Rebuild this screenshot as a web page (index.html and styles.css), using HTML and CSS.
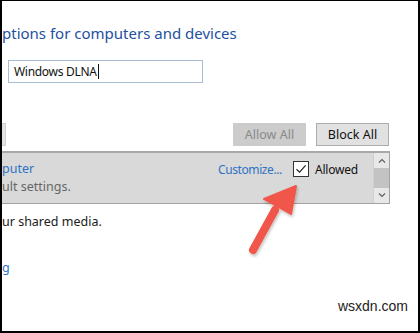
FILE: index.html
```html
<!DOCTYPE html>
<html>
<head>
<meta charset="utf-8">
<link rel="stylesheet" href="styles.css">
</head>
<body>
<div class="frame">
  <h1 class="title">ptions for computers and devices</h1>
  <div class="field"><span class="field-text">Windows DLNA</span><span class="caret"></span></div>
  <div class="toolbar">
    <span class="btn btn-stub"></span>
    <span class="spacer"></span>
    <span class="btn btn-disabled">Allow All</span>
    <span class="btn">Block All</span>
  </div>
  <div class="panel">
    <div class="row">
      <div class="row-info">
        <div class="row-name">puter</div>
        <div class="row-desc">ult settings.</div>
      </div>
      <div class="row-actions">
        <span class="link">Customize...</span>
        <span class="check">
          <svg width="14" height="14" viewBox="0 0 14 14"><path d="M2.5 7.2 L5.6 10.2 L11.6 3.4" fill="none" stroke="#222" stroke-width="1.2"/></svg>
        </span>
        <span class="check-label">Allowed</span>
      </div>
    </div>
    <div class="scrollbar">
      <svg class="sb-arrow" width="8" height="6" viewBox="0 0 8 6"><path d="M1 4.5 L4 1.5 L7 4.5" fill="none" stroke="#606060" stroke-width="1.2"/></svg>
      <span class="sb-thumb"></span>
      <svg class="sb-arrow" width="8" height="6" viewBox="0 0 8 6"><path d="M1 1.5 L4 4.5 L7 1.5" fill="none" stroke="#606060" stroke-width="1.2"/></svg>
    </div>
  </div>
  <p class="note">ur shared media.</p>
  <p class="more">g</p>

  <svg class="arrow" width="420" height="333" viewBox="0 0 420 333">
    <defs>
      <filter id="sh" x="-20%" y="-20%" width="140%" height="140%">
        <feDropShadow dx="1" dy="2" stdDeviation="1.5" flood-color="#000" flood-opacity="0.25"/>
      </filter>
    </defs>
    <g filter="url(#sh)">
      <line x1="253" y1="250" x2="275" y2="210" stroke="#f0564a" stroke-width="8" stroke-linecap="round"/>
      <polygon points="296,186 264,199 291,214" fill="#f0564a" stroke="#f0564a" stroke-width="2" stroke-linejoin="round"/>
    </g>
  </svg>
  <span class="watermark">wsxdn.com</span>
</div>
</body>
</html>
```
FILE: styles.css
```css
html, body {
  margin: 0;
  padding: 0;
  background: #fff;
}

.frame {
  position: relative;
  box-sizing: border-box;
  width: 420px;
  height: 333px;
  border: 2px solid #000;
  border-top-width: 1px;
  overflow: hidden;
  background: #fff;
  font-family: "Noto Sans", "Open Sans", sans-serif;
  color: #1a1a1a;
}

.title {
  margin: 22px 0 0 0;
  font-size: 15px;
  font-weight: 400;
  line-height: 20px;
  color: #23519f;
  white-space: nowrap;
}

.field {
  display: flex;
  align-items: center;
  box-sizing: border-box;
  width: 195px;
  height: 23px;
  margin: 17px 0 0 6px;
  padding-left: 5px;
  border: 1px solid #a9bed6;
  font-size: 12px;
  letter-spacing: -0.3px;
  color: #111;
}

.caret {
  width: 1px;
  height: 15px;
  background: #111;
  margin-left: 1px;
}

.toolbar {
  display: flex;
  align-items: center;
  gap: 10px;
  margin-top: 40px;
  padding-right: 29px;
  height: 23px;
}

.spacer {
  flex: 1;
}

.btn {
  box-sizing: border-box;
  display: flex;
  align-items: center;
  justify-content: center;
  width: 73px;
  height: 23px;
  background: #e1e1e1;
  border: 1px solid #adadad;
  font-size: 12.5px;
  color: #111;
}

.btn-disabled {
  background: #cccccc;
  border-color: #cccccc;
  color: #8a8a8a;
}

.btn-stub {
  width: 5px;
  margin-left: -1px;
  border-left: none;
  background: #e3e3e3;
  border-color: #cfcfcf;
}

.panel {
  display: flex;
  box-sizing: border-box;
  width: 388px;
  height: 53px;
  margin-top: 5px;
  background: #d9d9d9;
  border: 1px solid #a2a2a2;
  border-top: 2px solid #a8a8a8;
  border-left: none;
}

.row {
  flex: 1;
  display: flex;
  justify-content: space-between;
  padding-top: 7px;
}

.row-info {
  font-size: 12.5px;
  line-height: 18px;
}

.row-name {
  color: #2f73c4;
}

.row-desc {
  color: #666;
}

.row-actions {
  display: flex;
  align-items: center;
  height: 18px;
  padding-right: 15px;
  font-size: 12px;
}

.link {
  color: #2f73c4;
  margin-right: 11px;
  letter-spacing: -0.4px;
}

.check {
  box-sizing: border-box;
  display: flex;
  align-items: center;
  justify-content: center;
  width: 16px;
  height: 16px;
  background: #fff;
  border: 1px solid #333;
  margin-right: 6px;
}

.check-label {
  color: #111;
  letter-spacing: -0.2px;
}

.scrollbar {
  display: flex;
  flex-direction: column;
  align-items: center;
  justify-content: space-between;
  width: 16px;
  padding: 5px 0 5px;
  box-sizing: border-box;
  background: #e8e8e8;
  border-left: 1px solid #cfcfcf;
}

.sb-thumb {
  align-self: stretch;
  height: 20px;
  background: #c3c3c3;
}

.note {
  margin: 9px 0 0 0;
  font-size: 12.5px;
  line-height: 18px;
  color: #1a1a1a;
}

.more {
  margin: 28px 0 0 0;
  font-size: 12.5px;
  line-height: 18px;
  color: #2f73c4;
}

.arrow {
  position: absolute;
  left: -2px;
  top: -1px;
  pointer-events: none;
}

.watermark {
  position: absolute;
  right: 10px;
  bottom: 17px;
  font-family: "Liberation Sans", Arial, sans-serif;
  font-size: 14px;
  line-height: 16px;
  color: #222;
}
```
